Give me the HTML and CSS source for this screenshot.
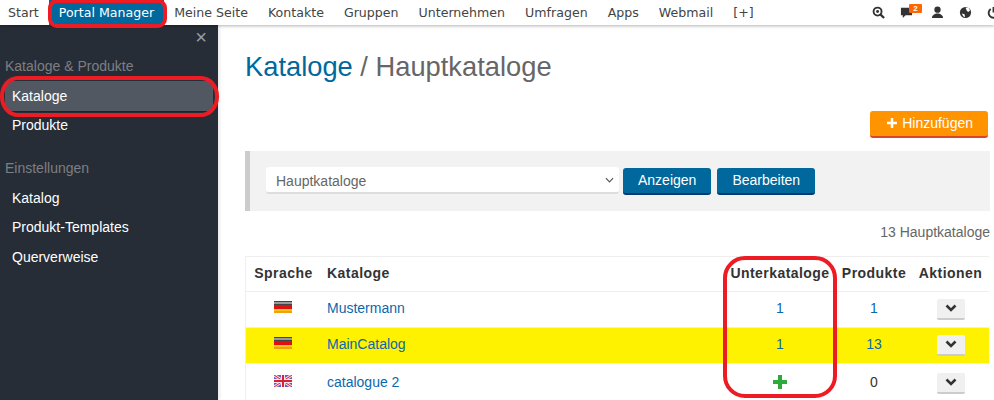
FILE: index.html
```html
<!DOCTYPE html>
<html lang="de">
<head>
    <meta charset="UTF-8">
    <title>Kataloge</title>
    <link rel="stylesheet" href="styles.css">
</head>
<body>
    <div class="topbar">
        <nav class="topnav">
            <a href="#">Start</a>
            <a href="#" class="active">Portal Manager</a>
            <a href="#">Meine Seite</a>
            <a href="#">Kontakte</a>
            <a href="#">Gruppen</a>
            <a href="#">Unternehmen</a>
            <a href="#">Umfragen</a>
            <a href="#">Apps</a>
            <a href="#">Webmail</a>
            <a href="#">[+]</a>
        </nav>
        <div class="topicons">
            <svg class="icon" viewBox="0 0 14 14"><circle cx="6" cy="6" r="4.3" fill="none" stroke="#333" stroke-width="2"/><circle cx="6" cy="6" r="1.6" fill="#333"/><path d="M9 9l4 4" stroke="#333" stroke-width="2.4"/></svg>
            <span class="chat">
                <svg class="icon" viewBox="0 0 14 14"><path d="M1 2h12v8H6l-3 3v-3H1z" fill="#333"/></svg>
                <span class="badge">2</span>
            </span>
            <svg class="icon" viewBox="0 0 14 14"><circle cx="7" cy="4" r="3.4" fill="#333"/><path d="M1 13c0-3 2-4 4.500-5h3c2.500 1 4.500 2 4.500 5z" fill="#333"/></svg>
            <svg class="icon" viewBox="0 0 14 14"><circle cx="7" cy="7" r="6" fill="#333"/><path d="M7 2l3-.500 2 3-2 2-1.500-1zM3 8l3 1 .5 3-2-1z" fill="#fff"/></svg>
            <svg class="icon" viewBox="0 0 14 14"><path d="M4 3.200a5.200 5.200 0 1 0 6 0" fill="none" stroke="#333" stroke-width="2"/><path d="M7 1v6" stroke="#333" stroke-width="2"/></svg>
        </div>
    </div>

    <div class="layout">
        <aside class="sidebar">
            <div class="close">&times;</div>
            <h4>Kataloge &amp; Produkte</h4>
            <a href="#" class="item current">Kataloge</a>
            <a href="#" class="item">Produkte</a>
            <h4 class="second">Einstellungen</h4>
            <a href="#" class="item">Katalog</a>
            <a href="#" class="item">Produkt-Templates</a>
            <a href="#" class="item">Querverweise</a>
        </aside>

        <main class="content">
            <h1><a href="#">Kataloge</a> / Hauptkataloge</h1>
            <div class="actions">
                <a href="#" class="btn btn-orange">
                    <svg class="plus" viewBox="0 0 12 12"><path d="M4.500 0h3v4.500H12v3H7.500V12h-3V7.500H0v-3h4.500z" fill="#fff"/></svg>
                    Hinzufügen
                </a>
            </div>
            <div class="filter">
                <div class="select">Hauptkataloge
                    <svg class="caret" viewBox="0 0 10 6"><path d="M1 1l4 4 4-4" fill="none" stroke="#555" stroke-width="1.300"/></svg>
                </div>
                <a href="#" class="btn btn-blue">Anzeigen</a>
                <a href="#" class="btn btn-blue">Bearbeiten</a>
            </div>
            <div class="count">13 Hauptkataloge</div>

            <table>
                <thead>
                    <tr>
                        <th class="col-lang">Sprache</th>
                        <th class="col-name">Kataloge</th>
                        <th class="col-sub">Unterkataloge</th>
                        <th class="col-prod">Produkte</th>
                        <th class="col-act">Aktionen</th>
                    </tr>
                </thead>
                <tbody>
                    <tr>
                        <td class="col-lang">
                            <svg class="flag" viewBox="0 0 18 12"><rect width="18" height="4" fill="#444"/><rect y="1" width="18" height="2" fill="#999"/><rect y="4" width="18" height="4" fill="#e01010"/><rect y="8" width="18" height="2" fill="#fcc414"/><rect y="10" width="18" height="2" fill="#f0a010"/></svg>
                        </td>
                        <td class="col-name"><a href="#">Mustermann</a></td>
                        <td class="col-sub"><a href="#">1</a></td>
                        <td class="col-prod"><a href="#">1</a></td>
                        <td class="col-act"><span class="more"><svg viewBox="0 0 12 8"><path d="M1.500 1.500L6 6l4.500-4.500" fill="none" stroke="#333" stroke-width="2.600"/></svg></span></td>
                    </tr>
                    <tr class="highlight">
                        <td class="col-lang">
                            <svg class="flag" viewBox="0 0 18 12"><rect width="18" height="4" fill="#444"/><rect y="1" width="18" height="2" fill="#999"/><rect y="4" width="18" height="4" fill="#e01010"/><rect y="8" width="18" height="2" fill="#fcc414"/><rect y="10" width="18" height="2" fill="#f0a010"/></svg>
                        </td>
                        <td class="col-name"><a href="#">MainCatalog</a></td>
                        <td class="col-sub"><a href="#">1</a></td>
                        <td class="col-prod"><a href="#">13</a></td>
                        <td class="col-act"><span class="more"><svg viewBox="0 0 12 8"><path d="M1.500 1.500L6 6l4.500-4.500" fill="none" stroke="#333" stroke-width="2.600"/></svg></span></td>
                    </tr>
                    <tr>
                        <td class="col-lang">
                            <svg class="flag" viewBox="0 0 18 12"><rect width="18" height="12" fill="#5a62c8"/><path d="M0 0l18 12M18 0L0 12" stroke="#f4d8e0" stroke-width="3"/><path d="M0 0l18 12M18 0L0 12" stroke="#d8203a" stroke-width="1"/><path d="M9 0v12M0 6h18" stroke="#f4e8ec" stroke-width="4"/><path d="M9 0v12M0 6h18" stroke="#d8203a" stroke-width="2"/></svg>
                        </td>
                        <td class="col-name"><a href="#">catalogue 2</a></td>
                        <td class="col-sub"><svg class="add" viewBox="0 0 14 14"><path d="M5 0h4v5h5v4H9v5H5V9H0V5h5z" fill="#2eaa3c"/></svg></td>
                        <td class="col-prod">0</td>
                        <td class="col-act"><span class="more"><svg viewBox="0 0 12 8"><path d="M1.500 1.500L6 6l4.500-4.500" fill="none" stroke="#333" stroke-width="2.600"/></svg></span></td>
                    </tr>
                </tbody>
            </table>
        </main>
    </div>

    <!-- red markers drawn over the screenshot -->
    <div class="mark mark-nav"></div>
    <div class="mark mark-side"></div>
    <div class="mark mark-col"></div>
</body>
</html>
```

FILE: styles.css
```css
html, body {
    height: 400px;
    overflow: hidden;
}

body {
    font-family: "Liberation Sans", Arial, sans-serif;
    font-size: 14px;
    margin: 0;
    padding: 0;
    background: #fff;
    color: #333;
    position: relative;
}

a {
    text-decoration: none;
}

.topbar {
    display: flex;
    justify-content: space-between;
    height: 25px;
    background: #fff;
    box-shadow: 0 1px 3px rgba(0, 0, 0, 0.3);
    position: relative;
}

.topnav {
    display: flex;
    font-family: "DejaVu Sans", Verdana, sans-serif;
    font-size: 12.6px;
}

.topnav a {
    color: #444;
    padding: 0 10px;
    line-height: 25px;
    white-space: nowrap;
}

.topnav a:first-child {
    padding-left: 8px;
}

.topnav a.active {
    background: #00689d;
    color: #fff;
}

.topicons {
    display: flex;
    align-items: center;
    gap: 15px;
    width: 122px;
    overflow: hidden;
    flex-shrink: 0;
}

.icon {
    width: 13px;
    height: 13px;
    flex-shrink: 0;
}

.chat {
    position: relative;
    display: flex;
    margin-right: 3px;
}

.badge {
    position: absolute;
    top: -2px;
    left: 9px;
    background: #f60;
    color: #fff;
    font-size: 8px;
    font-weight: bold;
    line-height: 9px;
    width: 13px;
    text-align: center;
    border-radius: 1px;
}

.layout {
    display: flex;
    height: 375px;
}

.sidebar {
    width: 218px;
    flex-shrink: 0;
    background: #272d36;
    padding: 0 5px;
    box-sizing: border-box;
    box-shadow: 1px 0 4px rgba(0, 0, 0, 0.12);
}

.close {
    color: #9a9ea4;
    font-size: 20px;
    line-height: 24px;
    text-align: right;
    padding-right: 6px;
}

.sidebar h4 {
    color: #7c7f83;
    font-size: 14px;
    font-weight: normal;
    line-height: 20px;
    margin: 7px 0 5px;
}

.sidebar h4.second {
    margin-top: 17px;
    margin-bottom: 6px;
}

.item {
    display: block;
    color: #fff;
    line-height: 29.5px;
    padding-left: 7px;
}

.item.current {
    background: #525862;
    border-bottom: 1px solid #1e232a;
    border-radius: 3px;
    line-height: 30px;
    margin-bottom: -1px;
}

.content {
    flex: 1;
    padding: 0 4px 0 27px;
    min-width: 0;
}

h1 {
    font-size: 27.3px;
    font-weight: normal;
    color: #666;
    line-height: 32px;
    margin: 26px 0 0;
}

h1 a {
    color: #00689d;
}

.actions {
    display: flex;
    justify-content: flex-end;
    margin-top: 28px;
    padding-right: 2px;
}

.btn {
    display: inline-block;
    height: 25px;
    line-height: 25px;
    color: #fff;
    border-radius: 3px;
}

.btn-orange {
    background: #ff9300;
    border-bottom: 2px solid #d9472b;
    padding: 0 15px 0 17px;
}

.plus {
    width: 10px;
    height: 10px;
    margin-right: 1px;
}

.btn-blue {
    background: #00689d;
    border-bottom: 2px solid #003a70;
    padding: 0 15px;
    margin-top: 1px;
}

.filter {
    display: flex;
    align-items: flex-start;
    gap: 6px;
    background: #f2f2f2;
    border-left: 5px solid #ccc;
    height: 60px;
    margin-top: 13px;
    padding: 16px 0 0 16px;
    box-sizing: border-box;
}

.select {
    width: 343px;
    height: 25px;
    line-height: 28px;
    padding-left: 10px;
    margin-right: -2px;
    background: #fff;
    border-bottom: 2px solid #ddd;
    border-radius: 3px;
    color: #666;
    position: relative;
}

.caret {
    position: absolute;
    right: 5px;
    top: 10px;
    width: 9px;
    height: 6px;
}

.count {
    color: #666;
    text-align: right;
    line-height: 20px;
    margin-top: 11px;
}

table {
    width: 744px;
    border-collapse: collapse;
    margin-top: 14px;
    table-layout: fixed;
}

th, td {
    border-top: 1px solid #eee;
    padding: 0;
    vertical-align: middle;
}

th {
    height: 32px;
    padding-bottom: 2px;
    color: #333;
    letter-spacing: 0.45px;
    text-align: center;
    white-space: nowrap;
}

td {
    height: 32px;
    padding-bottom: 3px;
    text-align: center;
    color: #333;
}

tbody tr:last-child td {
    padding-top: 2px;
}

table th:first-child, table td:first-child {
    border-left: 1px solid #eee;
}

td.col-lang {
    padding-right: 2px;
}

td a {
    color: #0b68ad;
}

tr.highlight td {
    background: #fff200;
}

.col-lang {
    width: 75px;
}

.col-name {
    width: 399px;
}

th.col-name, td.col-name {
    text-align: left;
    padding-left: 6px;
}

.col-sub {
    width: 108px;
}

.col-prod {
    width: 80px;
}

.col-act {
    padding-right: 2px;
}

.flag {
    display: block;
    width: 18px;
    height: 12px;
    margin: 0 auto 2px;
}

.add {
    display: block;
    width: 14px;
    height: 14px;
    margin: 0 auto;
}

.more {
    display: inline-flex;
    align-items: center;
    justify-content: center;
    width: 28px;
    height: 19px;
    margin-top: 2px;
    background: #f0f0f0;
    border-bottom: 2px solid #ccc;
    border-radius: 2px;
}

.more svg {
    width: 12px;
    height: 8px;
}

.mark {
    position: absolute;
    border: 4px solid #ed1c24;
    box-sizing: border-box;
}

.mark-nav {
    left: 48px;
    top: -1px;
    width: 119px;
    height: 29px;
    border-radius: 9px;
}

.mark-side {
    left: 0;
    top: 76px;
    width: 219px;
    height: 41px;
    border-radius: 18px / 20px;
}

.mark-col {
    left: 723px;
    top: 256px;
    width: 114px;
    height: 142px;
    border-radius: 22px;
}
```
